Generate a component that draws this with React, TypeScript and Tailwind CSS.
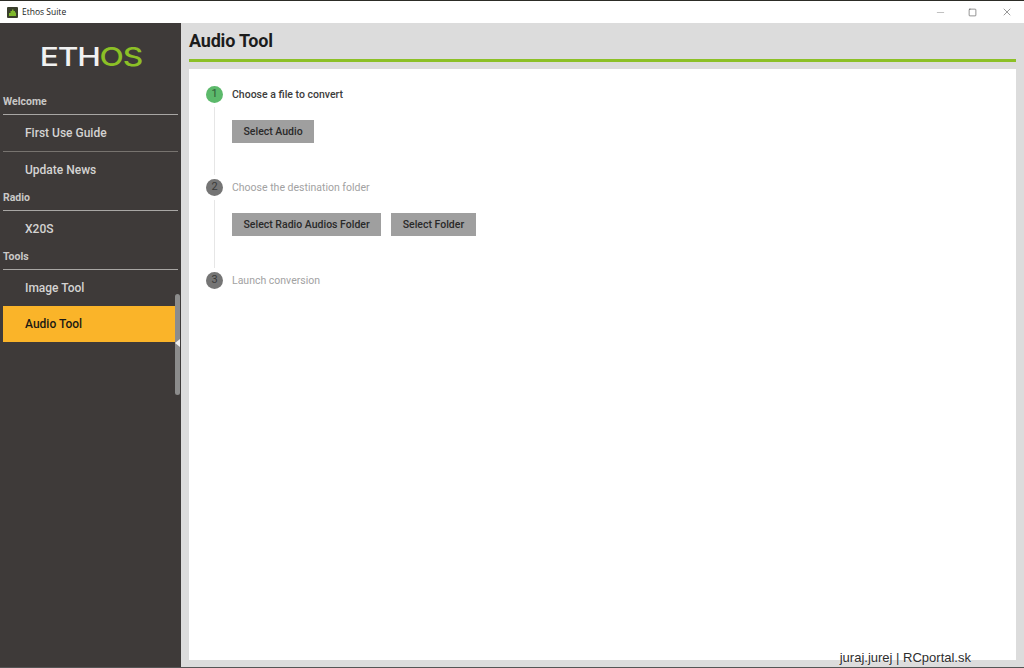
import React from "react";
import { Minus, Square, X } from "lucide-react";

const roboto = "font-['Roboto','Liberation_Sans',sans-serif]";

const NavItem: React.FC<{ label: string; active?: boolean; divider?: boolean }> = ({ label, active, divider }) => (
  <div
    className={`flex h-9 items-center pl-[22px] text-[12px] font-medium ${
      active ? "mr-[3px] bg-[#fab429] text-[#1c1a14]" : "text-[#d4d3d2]"
    } ${divider ? "h-[37px] border-b border-[#77736f]" : ""}`}
  >
    {label}
  </div>
);

const SectionLabel: React.FC<{ label: string }> = ({ label }) => (
  <div className="flex h-[23px] items-center border-b border-[#a8a6a4] pb-[2px] text-[10.5px] font-bold text-[#c9c8c7]">
    {label}
  </div>
);

const Step: React.FC<{ n: number; label: string; active?: boolean; last?: boolean; children?: React.ReactNode }> = ({
  n,
  label,
  active,
  last,
  children,
}) => (
  <div className="flex gap-[9px]">
    <div className="flex w-[17px] flex-col items-center">
      <div
        className={`flex h-[17px] w-[17px] shrink-0 items-center justify-center rounded-full text-[11px] ${
          active ? "bg-[#5cb96b] text-[#2f5a37]" : "bg-[#757575] text-[#3a3a3a]"
        }`}
      >
        {n}
      </div>
      {!last && <div className="my-[4px] w-px flex-1 bg-[#e6e6e6]" />}
    </div>
    <div className={last ? "" : "h-[93px]"}>
      <div className={`flex h-[17px] items-center text-[10.5px] ${active ? "font-medium text-[#3c3c3c]" : "text-[#a2a2a2]"}`}>
        {label}
      </div>
      {children && <div className="mt-[17px] flex gap-[10px]">{children}</div>}
    </div>
  </div>
);

const GreyButton: React.FC<{ label: string }> = ({ label }) => (
  <button className="flex h-[23px] items-center bg-[#9f9f9f] px-[11.5px] text-[10.5px] font-medium text-[#2a2a2a]">
    {label}
  </button>
);

export default function App() {
  return (
    <div className={`relative flex h-[668px] w-[1024px] flex-col overflow-hidden bg-[#dcdcdc] ${roboto}`}>
      {/* Window title bar */}
      <div className="h-px bg-[#2c2c26]" />
      <div className="flex h-[22px] items-center bg-white pl-[7px]">
        <svg width="11" height="11" viewBox="0 0 11 11">
          <rect width="11" height="11" rx="1" fill="#3a3f2c" />
          <path d="M2 9V6h1.5V4H5V2.5h1.5V4H8v1.5h1V9z" fill="#7fb82c" />
        </svg>
        <span className="ml-[4px] font-['Open_Sans',sans-serif] text-[8.5px] text-[#222]">Ethos Suite</span>
        <div className="ml-auto flex items-center text-[#333]">
          <Minus size={11} strokeWidth={1} className="mr-[22px] text-[#777]" />
          <Square size={9} strokeWidth={1.4} className="mr-[24px]" />
          <X size={12} strokeWidth={1} className="mr-[11px]" />
        </div>
      </div>

      <div className="flex min-h-0 flex-1">
        {/* Sidebar */}
        <aside className="relative flex w-[181px] flex-col bg-[#3e3a39] pl-[3px] pr-[3px]">
          <div className="flex h-[69px] items-center justify-center pb-[2px]">
            <span className="inline-block origin-center scale-x-[1.22] font-['Inter',sans-serif] text-[26px] font-medium tracking-[-1px] text-[#f1f1f1]">
              ETH<span className="text-[#8cc026]">OS</span>
            </span>
          </div>
          <SectionLabel label="Welcome" />
          <NavItem label="First Use Guide" divider />
          <NavItem label="Update News" />
          <SectionLabel label="Radio" />
          <NavItem label="X20S" />
          <SectionLabel label="Tools" />
          <NavItem label="Image Tool" />
          <NavItem label="Audio Tool" active />
          {/* Scrollbar + collapse handle */}
          <div className="absolute left-[175px] top-[271px] h-[101px] w-[5px] rounded-full bg-[#8c8c8c]" />
          <div className="absolute left-[175px] top-[316px] h-0 w-0 border-y-[4px] border-r-[5px] border-y-transparent border-r-[#efefef]" />
        </aside>

        {/* Main */}
        <main className="flex min-w-0 flex-1 flex-col pl-[8px] pr-[8px]">
          <div className="flex h-[39px] items-center border-b-[3px] border-[#8cc026]">
            <h1 className="text-[18px] font-bold leading-none tracking-[-0.2px] text-[#1c1c1c]">Audio Tool</h1>
          </div>
          <div className="mb-[7px] mt-[7px] flex-1 bg-white pl-[17px] pt-[17px]">
            <Step n={1} label="Choose a file to convert" active>
              <GreyButton label="Select Audio" />
            </Step>
            <Step n={2} label="Choose the destination folder">
              <GreyButton label="Select Radio Audios Folder" />
              <GreyButton label="Select Folder" />
            </Step>
            <Step n={3} label="Launch conversion" last />
          </div>
        </main>
      </div>
      <div className="h-px bg-[#555]" />

      {/* Watermark */}
      <div className="absolute bottom-[3px] right-[53px] font-['Liberation_Sans',sans-serif] text-[13px] leading-[15px] text-[#2e2e2e] [text-shadow:0_0_2px_#ffffff]">
        juraj.jurej | RCportal.sk
      </div>
    </div>
  );
}
